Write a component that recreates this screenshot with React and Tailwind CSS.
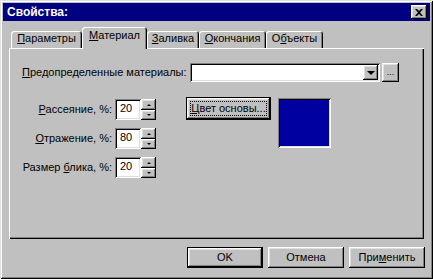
const raised =
  "shadow-[inset_-1px_-1px_#000,inset_1px_1px_#fff,inset_-2px_-2px_#808080,inset_2px_2px_#dfdfdf]";
const sunken =
  "shadow-[inset_1px_1px_#808080,inset_-1px_-1px_#fff,inset_2px_2px_#000,inset_-2px_-2px_#dfdfdf]";

function U({ children }) {
  return <span className="underline underline-offset-[1px]">{children}</span>;
}

function Tab({ children, active, w }) {
  if (active) {
    return (
      <div
        className={`relative z-10 -mb-[1px] h-[22px] ${w} bg-[#c0c0c0] rounded-t-[3px] shadow-[inset_1px_1px_#fff,inset_-1px_0_#000,inset_-2px_0_#808080] flex items-start justify-center pt-[3px]`}
      >
        {children}
      </div>
    );
  }
  return (
    <div
      className={`h-[17px] ${w} bg-[#c0c0c0] rounded-t-[3px] shadow-[inset_1px_1px_#fff,inset_-1px_0_#000,inset_-2px_0_#808080] flex items-start justify-center pt-[2px]`}
    >
      {children}
    </div>
  );
}

function Arrow({ up }) {
  return (
    <div
      className={
        up
          ? "w-0 h-0 border-l-[2px] border-r-[2px] border-b-[2px] border-l-transparent border-r-transparent border-b-black"
          : "w-0 h-0 border-l-[2px] border-r-[2px] border-t-[2px] border-l-transparent border-r-transparent border-t-black"
      }
    />
  );
}

function Spinner({ label, value }) {
  return (
    <div className="flex items-center h-[21px]">
      <div className="w-[91px] text-right pr-[1px]">{label}</div>
      <div className={`ml-[2px] w-[26px] h-[21px] bg-white ${sunken} flex items-center pl-[5px] pb-[2px]`}>
        {value}
      </div>
      <div className="flex flex-col w-[15px] h-[21px]">
        <div className={`h-[11px] bg-[#c0c0c0] ${raised} flex items-center justify-center`}>
          <Arrow up />
        </div>
        <div className={`h-[10px] bg-[#c0c0c0] ${raised} flex items-center justify-center`}>
          <Arrow />
        </div>
      </div>
    </div>
  );
}

function Button({ children, focus }) {
  if (focus) {
    return (
      <div className="w-[76px] h-[21px] border border-black">
        <div className={`w-full h-full bg-[#c0c0c0] ${raised} flex items-center justify-center`}>
          {children}
        </div>
      </div>
    );
  }
  return (
    <div className={`w-[76px] h-[21px] bg-[#c0c0c0] ${raised} flex items-center justify-center`}>
      {children}
    </div>
  );
}

export default function App() {
  return (
    <div
      className="w-[433px] h-[279px] bg-[#c0c0c0] p-[3px] text-black text-[11px] leading-none shadow-[inset_1px_1px_#dfdfdf,inset_-1px_-1px_#000,inset_2px_2px_#fff,inset_-2px_-2px_#808080] flex flex-col"
      style={{ fontFamily: '"Liberation Sans", Arial, sans-serif' }}
    >
      <div className="h-[18px] bg-[#000080] flex items-center justify-between pl-[4px] pr-[3px]">
        <span className="text-white font-bold text-[12px]">Свойства:</span>
        <div className={`w-[16px] h-[14px] bg-[#c0c0c0] ${raised} flex items-center justify-center`}>
          <svg width="8" height="7" viewBox="0 0 8 7">
            <path d="M0 0h2l2 2 2-2h2L5 3.5 8 7H6L4 5 2 7H0l3-3.5z" fill="#000" />
          </svg>
        </div>
      </div>

      <div className="ml-[6px] mt-[6px] w-[415px] flex flex-col">
        <div className="flex items-end h-[21px] pl-[2px]">
          <Tab w="w-[71px]">
            <span><U>П</U>араметры</span>
          </Tab>
          <Tab w="w-[65px]" active>
            <span><U>М</U>атериал</span>
          </Tab>
          <Tab w="w-[52px]">
            <span><U>З</U>аливка</span>
          </Tab>
          <Tab w="w-[67px]">
            <span><U>О</U>кончания</span>
          </Tab>
          <Tab w="w-[57px]">
            <span>О<U>б</U>ъекты</span>
          </Tab>
        </div>

        <div className="h-[191px] bg-[#c0c0c0] shadow-[inset_1px_1px_#fff,inset_-1px_-1px_#000,inset_-2px_-2px_#808080] pt-[15px] pl-[13px] flex flex-col">
          <div className="flex items-center h-[19px]">
            <div className="w-[168px]"><U>П</U>редопределенные материалы:</div>
            <div className={`w-[190px] h-[19px] bg-white ${sunken} flex justify-end p-[2px]`}>
              <div className={`w-[15px] h-full bg-[#c0c0c0] ${raised} flex items-center justify-center`}>
                <div className="w-0 h-0 border-l-[4px] border-r-[4px] border-t-[4px] border-l-transparent border-r-transparent border-t-black" />
              </div>
            </div>
            <div className={`ml-[2px] w-[17px] h-[19px] bg-[#c0c0c0] ${raised} flex items-end justify-center pb-[5px]`}>
              <span className="text-[9px]">...</span>
            </div>
          </div>

          <div className="flex mt-[17px]">
            <div className="flex flex-col gap-[8px]">
              <Spinner label={<span><U>Р</U>ассеяние, %:</span>} value="20" />
              <Spinner label={<span><U>О</U>тражение, %:</span>} value="80" />
              <Spinner label={<span>Размер <U>б</U>лика, %:</span>} value="20" />
            </div>
            <div className="ml-[30px] -mt-[2px] w-[85px] h-[23px] border border-black">
              <div className={`w-full h-full bg-[#c0c0c0] ${raised} p-[3px]`}>
                <div className="w-full h-full border border-dotted border-black flex items-center justify-center">
                  <span><U>Ц</U>вет основы...</span>
                </div>
              </div>
            </div>
            <div className="ml-[7px] -mt-[1px] w-[53px] h-[50px] bg-[#0000a0] shadow-[inset_1px_1px_#808080,inset_-1px_-1px_#fff,inset_2px_2px_#000,inset_-2px_-2px_#dfdfdf]" />
          </div>
        </div>
      </div>

      <div className="flex justify-end gap-[5px] mt-[8px] pr-[5px]">
        <Button focus>OK</Button>
        <Button>Отмена</Button>
        <Button>
          <span>При<U>м</U>енить</span>
        </Button>
      </div>
    </div>
  );
}
